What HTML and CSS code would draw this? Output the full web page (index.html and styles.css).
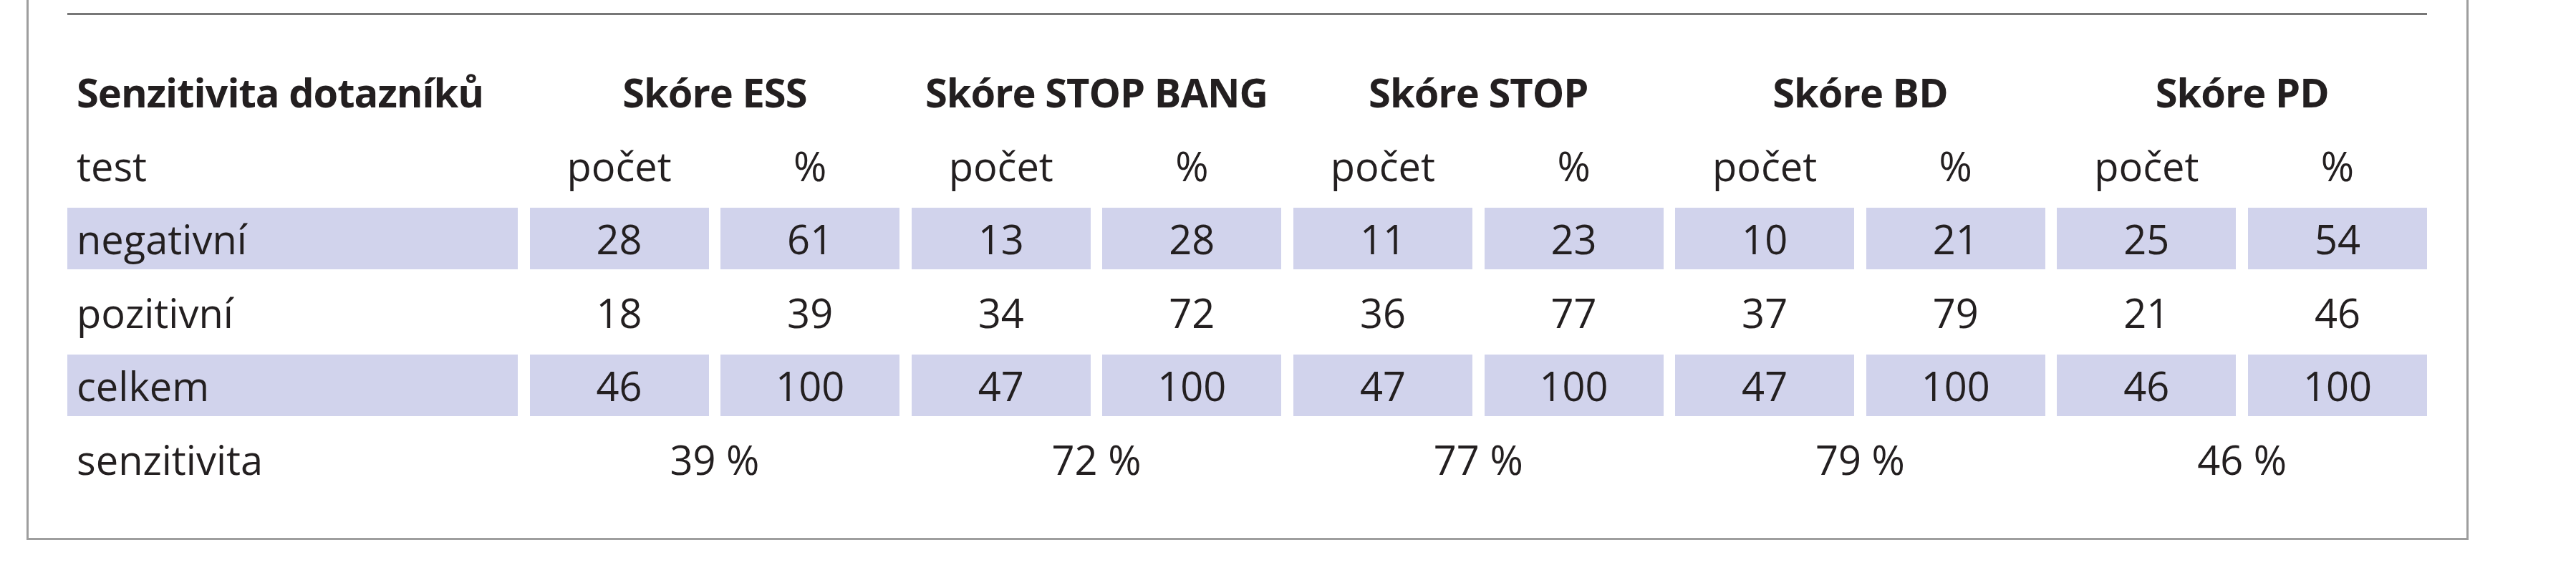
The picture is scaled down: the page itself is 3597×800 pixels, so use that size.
FILE: index.html
```html
<!DOCTYPE html>
<html lang="cs">
<head>
<meta charset="utf-8">
<title>Senzitivita dotazníků</title>
<link rel="stylesheet" href="styles.css">
</head>
<body>
<div class="frame">
  <div class="rule"></div>
  <div class="table">
    <div class="cell label head">Senzitivita dotazníků</div>
    <div class="cell head span2">Skóre ESS</div>
    <div class="cell head span2">Skóre STOP BANG</div>
    <div class="cell head span2">Skóre STOP</div>
    <div class="cell head span2">Skóre BD</div>
    <div class="cell head span2">Skóre PD</div>

    <div class="cell label">test</div>
    <div class="cell">počet</div><div class="cell">%</div>
    <div class="cell">počet</div><div class="cell">%</div>
    <div class="cell">počet</div><div class="cell">%</div>
    <div class="cell">počet</div><div class="cell">%</div>
    <div class="cell">počet</div><div class="cell">%</div>

    <div class="cell label shade">negativní</div>
    <div class="cell shade">28</div><div class="cell shade">61</div>
    <div class="cell shade">13</div><div class="cell shade">28</div>
    <div class="cell shade">11</div><div class="cell shade">23</div>
    <div class="cell shade">10</div><div class="cell shade">21</div>
    <div class="cell shade">25</div><div class="cell shade">54</div>

    <div class="cell label">pozitivní</div>
    <div class="cell">18</div><div class="cell">39</div>
    <div class="cell">34</div><div class="cell">72</div>
    <div class="cell">36</div><div class="cell">77</div>
    <div class="cell">37</div><div class="cell">79</div>
    <div class="cell">21</div><div class="cell">46</div>

    <div class="cell label shade">celkem</div>
    <div class="cell shade">46</div><div class="cell shade">100</div>
    <div class="cell shade">47</div><div class="cell shade">100</div>
    <div class="cell shade">47</div><div class="cell shade">100</div>
    <div class="cell shade">47</div><div class="cell shade">100</div>
    <div class="cell shade">46</div><div class="cell shade">100</div>

    <div class="cell label">senzitivita</div>
    <div class="cell span2">39 %</div>
    <div class="cell span2">72 %</div>
    <div class="cell span2">77 %</div>
    <div class="cell span2">79 %</div>
    <div class="cell span2">46 %</div>
  </div>
</div>
</body>
</html>
```
FILE: styles.css
```css
html, body {
  margin: 0;
  padding: 0;
  background: #ffffff;
}

body {
  font-family: "Open Sans", "Noto Sans", "DejaVu Sans", sans-serif;
  color: #231f20;
}

.frame {
  margin-left: 37px;
  width: 3295px;
  border: 3px solid #9e9e9e;
  border-top: none;
  padding: 18px 55px 67px 54px;
  box-sizing: content-box;
}

.rule {
  height: 3px;
  background: #777777;
}

.table {
  margin-top: 64px;
  display: grid;
  grid-template-columns: 629px repeat(10, 1fr);
  grid-auto-rows: 86px;
  gap: 16.5px;
}

.cell {
  display: flex;
  align-items: center;
  justify-content: center;
  font-size: 56px;
  line-height: 1;
  white-space: nowrap;
}

.cell.label {
  justify-content: flex-start;
  padding-left: 13px;
}

.cell.head {
  font-weight: 700;
  font-size: 56px;
  letter-spacing: -1px;
}

.span2 {
  grid-column: span 2;
}

.shade {
  background: #d1d3ec;
}
```
